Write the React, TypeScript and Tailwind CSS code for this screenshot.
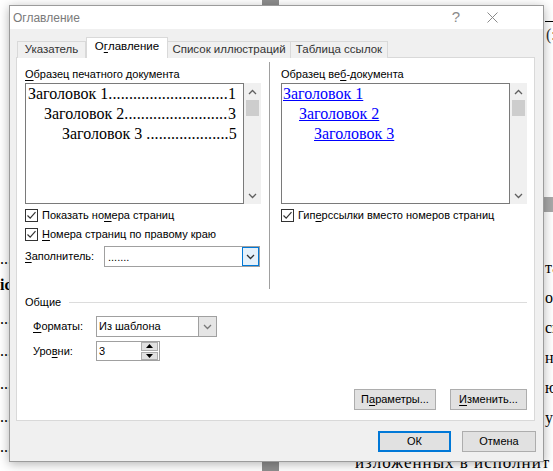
import React from "react";

const ui = { fontFamily: '"Liberation Sans", Arial, sans-serif' };
const serif = { fontFamily: '"Liberation Serif", "Times New Roman", serif' };

function U({ children }: { children: React.ReactNode }) {
  return <span className="underline underline-offset-2">{children}</span>;
}

function Check() {
  return (
    <div className="w-[13px] h-[13px] border border-[#333] bg-white flex items-center justify-center shrink-0">
      <svg width="11" height="11" viewBox="0 0 11 11">
        <path d="M1.5 5.5 L4.2 8.2 L9.5 2.2" fill="none" stroke="#333" strokeWidth="1.2" />
      </svg>
    </div>
  );
}

function Chevron({ up, color = "#606060" }: { up?: boolean; color?: string }) {
  return (
    <svg width="9" height="6" viewBox="0 0 9 6">
      <path d={up ? "M1 5 L4.5 1.5 L8 5" : "M1 1 L4.5 4.5 L8 1"} fill="none" stroke={color} strokeWidth="1.3" />
    </svg>
  );
}

function Scrollbar() {
  return (
    <div className="w-[17px] bg-[#f0f0f0] flex flex-col items-center">
      <div className="h-[17px] flex items-center justify-center">
        <Chevron up />
      </div>
      <div className="w-[13px] h-[16px] bg-[#cdcdcd]" />
      <div className="flex-1" />
      <div className="h-[17px] flex items-center justify-center">
        <Chevron />
      </div>
    </div>
  );
}

// dot leader with a fixed count so the dots fit the gap
function Leader({ text, num, indent, dots }: { text: string; num: string; indent: number; dots: number }) {
  return (
    <div className="flex whitespace-nowrap" style={{ paddingLeft: indent }}>
      <span className="shrink-0">{text}</span>
      <span className="flex-1 text-left tracking-[0.12px]">{".".repeat(dots)}</span>
      <span className="shrink-0">{num}</span>
    </div>
  );
}

function Btn({ children, w, primary }: { children: React.ReactNode; w: string; primary?: boolean }) {
  return (
    <div
      className={
        "h-[21px] flex items-center justify-center bg-[#e1e1e1] text-[11px] " +
        w +
        (primary ? " border-2 border-[#0078d7]" : " border border-[#adadad]")
      }
    >
      {children}
    </div>
  );
}

export default function App() {
  return (
    <div className="relative w-[553px] h-[471px] bg-white overflow-hidden text-black" style={ui}>
      {/* document behind the dialog */}
      <div className="absolute left-[262px] top-0 w-[17px] h-[6px] bg-[#8e8e8e]" />
      <div className="absolute left-[262px] top-[460px] w-[17px] h-[11px] bg-[#8e8e8e]" />
      <div className="absolute left-[545px] top-[21px] w-[8px] h-px bg-black" />
      <div className="absolute left-[544px] top-[197px] w-[9px] h-[15px] bg-[#a8a8a8]" />
      <div className="absolute left-[546px] top-[26px] text-[16px] leading-[18px] text-[#333]" style={serif}>(:</div>
      <div className="absolute left-[545px] top-[259px] flex flex-col gap-[12px] text-[16px] leading-[18px]" style={serif}>
        <span>та</span>
        <span>ог</span>
        <span>сп</span>
        <span>нк</span>
        <span>ю</span>
        <span>у</span>
      </div>
      <div className="absolute left-[355px] top-[454px] text-[17px] leading-[18px] tracking-[1px] whitespace-nowrap" style={serif}>
        изложенных  в  исполнит
      </div>
      <div className="absolute left-0 top-[250px] flex flex-col text-[16px] leading-[18px]" style={serif}>
        <span className="h-[26px]">...</span>
        <span className="h-[34px] font-bold">іс</span>
        <span className="h-[32px]">...</span>
        <span className="h-[33px]">...</span>
        <span className="h-[33px]">...</span>
        <span className="h-[30px]">...</span>
        <span>...</span>
      </div>

      {/* dialog */}
      <div className="absolute left-[9px] top-[5px] w-[535px] h-[457px] border border-[#9b9b9b] bg-[#f0f0f0] flex flex-col shadow-[0_2px_10px_rgba(0,0,0,0.3)]">
        <div className="h-[23px] bg-white flex items-center pl-[3px] pr-[45px] text-[12px] text-[#7a7a7a]">
          <span>Оглавление</span>
          <span className="ml-auto text-[15px] text-[#8a8a8a]">?</span>
          <svg className="ml-[27px]" width="11" height="11" viewBox="0 0 11 11">
            <path d="M0.5 0.5 L10.5 10.5 M10.5 0.5 L0.5 10.5" stroke="#8a8a8a" strokeWidth="1" />
          </svg>
        </div>

        <div className="flex-1 flex flex-col pl-[6px] pr-[7px]">
          {/* tabs */}
          <div className="mt-[9px] ml-px h-[20px] flex items-end text-[11.5px] relative z-10 -mb-px">
            <div className="h-[17px] w-[69px] border border-b-0 border-[#d9d9d9] bg-[#f0f0f0] flex items-center justify-center text-[#333]">
              Указатель
            </div>
            <div className="h-[21px] w-[82px] border border-b-0 border-[#d9d9d9] bg-white flex items-center justify-center pb-[2px]">
              О<U>г</U>лавление
            </div>
            <div className="h-[17px] w-[123px] border border-b-0 border-l-0 border-[#d9d9d9] bg-[#f0f0f0] flex items-center justify-center text-[#333]">
              Список иллюстраций
            </div>
            <div className="h-[17px] w-[97px] border border-b-0 border-l-0 border-[#d9d9d9] bg-[#f0f0f0] flex items-center justify-center text-[#333]">
              Таблица ссылок
            </div>
          </div>

          {/* panel */}
          <div className="w-[519px] h-[364px] border border-[#d9d9d9] bg-white flex flex-col pl-[8px] pr-[7px] pt-[4px] text-[11px]">
            <div className="flex h-[227px]">
              {/* print preview */}
              <div className="w-[237px] flex flex-col pt-[5px]">
                <div className="leading-[14px]"><U>О</U>бразец печатного документа</div>
                <div className="mt-[2px] h-[121px] flex">
                  <div className="w-[219px] border border-[#7a7a7a] bg-white pl-[2px] pr-[7px] text-[16px] leading-[20px]" style={serif}>
                    <Leader text="Заголовок 1" num="1" indent={0} dots={29} />
                    <Leader text="Заголовок 2" num="3" indent={16} dots={25} />
                    <Leader text={"Заголовок 3\u00a0"} num="5" indent={34} dots={20} />
                  </div>
                  <Scrollbar />
                </div>
                <div className="mt-[5px] flex items-center gap-[4px] h-[13px]">
                  <Check />
                  <span>Показать но<U>м</U>ера страниц</span>
                </div>
                <div className="mt-[6px] flex items-center gap-[4px] h-[13px]">
                  <Check />
                  <span><U>Н</U>омера страниц по правому краю</span>
                </div>
                <div className="mt-[5px] flex items-center">
                  <span className="w-[79px]"><U>З</U>аполнитель:</span>
                  <div className="w-[156px] h-[21px] border border-[#a0a0a0] flex items-center">
                    <span className="flex-1 pl-[3px] leading-[12px]">.......</span>
                    <div className="w-[17px] h-[19px] border border-[#0078d7] bg-[#e5f1fb] flex items-center justify-center">
                      <Chevron color="#333" />
                    </div>
                  </div>
                </div>
              </div>

              <div className="ml-[8px] w-px bg-[#a0a0a0]" />

              {/* web preview */}
              <div className="ml-[11px] w-[246px] flex flex-col pt-[5px]">
                <div className="leading-[14px]">Образец ве<U>б</U>-документа</div>
                <div className="mt-[2px] h-[121px] flex">
                  <div className="w-[229px] border border-[#7a7a7a] bg-white pl-[1px] text-[16px] leading-[20px] text-[#0000ff]" style={serif}>
                    <div><span className="underline">Заголовок 1</span></div>
                    <div className="pl-[16px]"><span className="underline">Заголовок 2</span></div>
                    <div className="pl-[31px]"><span className="underline">Заголовок 3</span></div>
                  </div>
                  <Scrollbar />
                </div>
                <div className="mt-[5px] flex items-center gap-[4px] h-[13px]">
                  <Check />
                  <span>Гип<U>е</U>рссылки вместо номеров страниц</span>
                </div>
              </div>
            </div>

            {/* general */}
            <div className="mt-[6px] flex items-center h-[14px]">
              <span>Общие</span>
              <div className="flex-1 ml-[8px] h-px bg-[#dcdcdc]" />
            </div>
            <div className="mt-[7px] ml-[8px] flex items-center">
              <span className="w-[63px]"><U>Ф</U>орматы:</span>
              <div className="w-[121px] h-[21px] border border-[#a0a0a0] flex items-center">
                <span className="flex-1 pl-[2px]">Из шаблона</span>
                <div className="w-[18px] h-[19px] border-l border-[#a0a0a0] bg-[#e5e5e5] flex items-center justify-center">
                  <Chevron color="#777" />
                </div>
              </div>
            </div>
            <div className="mt-[4px] ml-[8px] flex items-center">
              <span className="w-[63px]">Уро<U>в</U>ни:</span>
              <div className="w-[64px] h-[20px] border border-[#a0a0a0] flex items-center">
                <span className="flex-1 pl-[2px]">3</span>
                <div className="w-[17px] h-[18px] flex flex-col gap-px mr-px">
                  <div className="flex-1 bg-[#e1e1e1] border border-[#adadad] flex items-center justify-center">
                    <svg width="7" height="4" viewBox="0 0 7 4"><path d="M0 4 L3.5 0 L7 4 Z" fill="#000" /></svg>
                  </div>
                  <div className="flex-1 bg-[#e1e1e1] border border-[#adadad] flex items-center justify-center">
                    <svg width="7" height="4" viewBox="0 0 7 4"><path d="M0 0 L3.5 4 L7 0 Z" fill="#000" /></svg>
                  </div>
                </div>
              </div>
            </div>

            <div className="mt-auto mb-[10px] flex justify-end gap-[14px]">
              <Btn w="w-[82px]">П<U>а</U>раметры...</Btn>
              <Btn w="w-[77px]"><U>И</U>зменить...</Btn>
            </div>
          </div>

          <div className="mt-[10px] flex justify-end gap-[11px]">
            <Btn w="w-[73px]" primary>ОК</Btn>
            <Btn w="w-[74px]">Отмена</Btn>
          </div>
        </div>
      </div>
    </div>
  );
}
